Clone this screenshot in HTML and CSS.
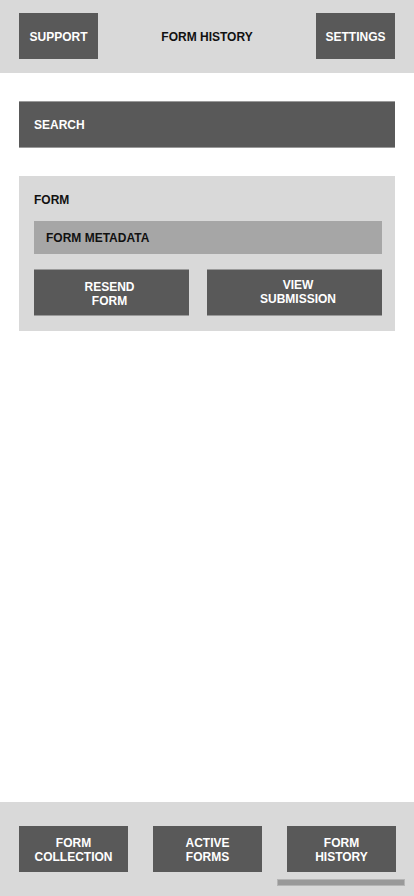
FILE: index.html
```html
<!DOCTYPE html>
<html lang="en">
<head>
<meta charset="utf-8">
<title>Form History</title>
<link rel="stylesheet" href="styles.css">
</head>
<body>
<div class="app">
  <header class="topbar">
    <div class="tbtn">SUPPORT</div>
    <div class="title">FORM HISTORY</div>
    <div class="tbtn">SETTINGS</div>
  </header>
  <main class="content">
    <div class="search">SEARCH</div>
    <section class="card">
      <div class="card-label">FORM</div>
      <div class="meta">FORM METADATA</div>
      <div class="actions">
        <div class="abtn abtn-resend">RESEND<br>FORM</div>
        <div class="abtn abtn-view">VIEW<br>SUBMISSION</div>
      </div>
    </section>
  </main>
  <footer class="navbar">
    <div class="navrow">
      <div class="nbtn">FORM<br>COLLECTION</div>
      <div class="nbtn">ACTIVE<br>FORMS</div>
      <div class="nbtn">FORM<br>HISTORY</div>
    </div>
    <div class="indicator"></div>
  </footer>
</div>
</body>
</html>
```

FILE: styles.css
```css
* { box-sizing: border-box; }
html, body { margin: 0; padding: 0; background: #ffffff; }
body {
  font-family: "Liberation Sans", Arial, sans-serif;
  font-weight: bold;
  font-size: 12px;
  line-height: 14px;
}
.app {
  height: 896px;
  display: flex;
  flex-direction: column;
}
.topbar {
  height: 73px;
  background: #d9d9d9;
  padding: 13px 19px 14px;
  display: flex;
  align-items: center;
  justify-content: space-between;
}
.tbtn {
  width: 79px;
  height: 46px;
  padding-top: 2px;
  background: #595959;
  color: #ffffff;
  display: flex;
  align-items: center;
  justify-content: center;
}
.title { color: #111111; padding-top: 2px; }
.content {
  flex: 1;
  padding: 28px 19px 0;
}
.search {
  height: 47px;
  background: #595959;
  border-top: 1px solid #9a9a9a;
  border-bottom: 1px solid #9a9a9a;
  color: #ffffff;
  padding-left: 15px;
  display: flex;
  align-items: center;
}
.card {
  margin-top: 28px;
  background: #d9d9d9;
  padding: 17px 13px 15px 15px;
}
.card-label { color: #111111; }
.meta {
  margin-top: 14px;
  height: 33px;
  background: #a6a6a6;
  color: #111111;
  padding-left: 12px;
  display: flex;
  align-items: center;
}
.actions {
  margin-top: 15px;
  display: grid;
  grid-template-columns: 155px 175px;
  column-gap: 18px;
}
.abtn {
  height: 47px;
  background: #595959;
  border-top: 1px solid #9a9a9a;
  border-bottom: 1px solid #9a9a9a;
  color: #ffffff;
  text-align: center;
  display: flex;
  align-items: center;
  justify-content: center;
}
.abtn-resend { padding: 2px 4px 0 0; }
.abtn-view { padding: 0 0 2px 7px; }
.navbar {
  height: 94px;
  background: #d9d9d9;
  padding-top: 24px;
  display: flex;
  flex-direction: column;
}
.navrow {
  display: flex;
  padding-left: 19px;
  gap: 25px;
}
.nbtn {
  width: 109px;
  height: 46px;
  padding-top: 2px;
  background: #595959;
  color: #ffffff;
  text-align: center;
  display: flex;
  align-items: center;
  justify-content: center;
}
.indicator {
  align-self: flex-end;
  margin-top: 7px;
  margin-right: 9px;
  width: 128px;
  height: 7px;
  background: #999999;
  border: 1px solid #b5b5b5;
}
```
